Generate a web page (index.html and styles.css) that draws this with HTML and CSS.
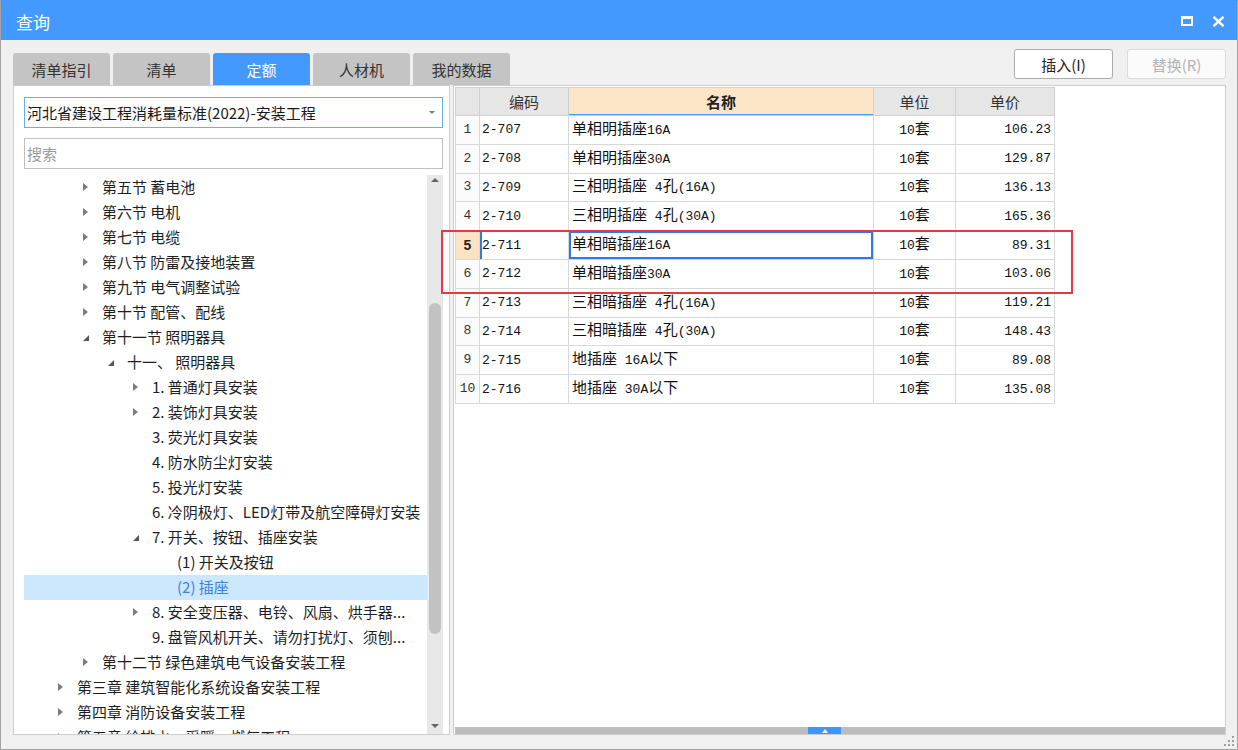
FILE: index.html
```html
<!DOCTYPE html>
<html lang="zh-CN">
<head>
<meta charset="utf-8">
<title>查询</title>
<link rel="stylesheet" href="styles.css">
</head>
<body>
<div class="window">
  <header class="titlebar">
    <span class="title">查询</span>
    <div class="winbtns">
      <svg class="ic" width="12" height="10" viewBox="0 0 12 10"><rect x="1" y="1" width="10" height="8" fill="none" stroke="#fff" stroke-width="2"/><rect x="0" y="0" width="12" height="3" fill="#fff"/></svg>
      <svg class="ic" width="13" height="11" viewBox="0 0 13 11"><path d="M1.5 0.8 L11.5 10.2 M11.5 0.8 L1.5 10.2" stroke="#fff" stroke-width="2.4" fill="none"/></svg>
    </div>
  </header>

  <div class="main">
    <div class="topbar">
      <nav class="tabs">
        <div class="tab">清单指引</div>
        <div class="tab">清单</div>
        <div class="tab active">定额</div>
        <div class="tab">人材机</div>
        <div class="tab">我的数据</div>
      </nav>
      <div class="actions">
        <button class="btn">插入(I)</button>
        <button class="btn" disabled>替换(R)</button>
      </div>
    </div>

    <div class="panels">
      <section class="left">
        <div class="select">
          <span>河北省建设工程消耗量标准(2022)-安装工程</span>
          <i class="caret"></i>
        </div>
        <div class="search">搜索</div>
        <div class="treewrap">
          <ul class="tree">
            <li class="l2"><i class="tg r"></i>第五节 蓄电池</li>
            <li class="l2"><i class="tg r"></i>第六节 电机</li>
            <li class="l2"><i class="tg r"></i>第七节 电缆</li>
            <li class="l2"><i class="tg r"></i>第八节 防雷及接地装置</li>
            <li class="l2"><i class="tg r"></i>第九节 电气调整试验</li>
            <li class="l2"><i class="tg r"></i>第十节 配管、配线</li>
            <li class="l2"><i class="tg d"></i>第十一节 照明器具</li>
            <li class="l3"><i class="tg d"></i>十一、 照明器具</li>
            <li class="l4"><i class="tg r"></i>1. 普通灯具安装</li>
            <li class="l4"><i class="tg r"></i>2. 装饰灯具安装</li>
            <li class="l4"><i class="tg"></i>3. 荧光灯具安装</li>
            <li class="l4"><i class="tg"></i>4. 防水防尘灯安装</li>
            <li class="l4"><i class="tg"></i>5. 投光灯安装</li>
            <li class="l4"><i class="tg"></i>6. 冷阴极灯、LED灯带及航空障碍灯安装</li>
            <li class="l4"><i class="tg d"></i>7. 开关、按钮、插座安装</li>
            <li class="l5"><i class="tg"></i>(1) 开关及按钮</li>
            <li class="l5 sel"><i class="tg"></i>(2) 插座</li>
            <li class="l4"><i class="tg r"></i>8. 安全变压器、电铃、风扇、烘手器...</li>
            <li class="l4"><i class="tg"></i>9. 盘管风机开关、请勿打扰灯、须刨...</li>
            <li class="l2"><i class="tg r"></i>第十二节 绿色建筑电气设备安装工程</li>
            <li class="l1"><i class="tg r"></i>第三章 建筑智能化系统设备安装工程</li>
            <li class="l1"><i class="tg r"></i>第四章 消防设备安装工程</li>
            <li class="l1"><i class="tg r"></i>第五章 给排水、采暖、燃气工程</li>
          </ul>
          <div class="vscroll">
            <i class="sb-up"></i>
            <div class="sb-track"><div class="sb-thumb"></div></div>
            <i class="sb-down"></i>
          </div>
        </div>
      </section>

      <section class="right">
        <div class="tablearea">
          <table class="grid">
            <colgroup>
              <col class="c-no"><col class="c-code"><col class="c-name"><col class="c-unit"><col class="c-price">
            </colgroup>
            <thead>
              <tr><th></th><th>编码</th><th class="cur">名称</th><th>单位</th><th>单价</th></tr>
            </thead>
            <tbody>
              <tr><td class="no">1</td><td class="code">2-707</td><td>单相明插座<span class="a">16A</span></td><td class="unit"><span class="a">10</span>套</td><td class="price">106.23</td></tr>
              <tr><td class="no">2</td><td class="code">2-708</td><td>单相明插座<span class="a">30A</span></td><td class="unit"><span class="a">10</span>套</td><td class="price">129.87</td></tr>
              <tr><td class="no">3</td><td class="code">2-709</td><td>三相明插座<span class="a"> 4</span>孔<span class="a">(16A)</span></td><td class="unit"><span class="a">10</span>套</td><td class="price">136.13</td></tr>
              <tr><td class="no">4</td><td class="code">2-710</td><td>三相明插座<span class="a"> 4</span>孔<span class="a">(30A)</span></td><td class="unit"><span class="a">10</span>套</td><td class="price">165.36</td></tr>
              <tr class="current"><td class="no">5</td><td class="code">2-711</td><td class="focus">单相暗插座<span class="a">16A</span></td><td class="unit"><span class="a">10</span>套</td><td class="price">89.31</td></tr>
              <tr><td class="no">6</td><td class="code">2-712</td><td>单相暗插座<span class="a">30A</span></td><td class="unit"><span class="a">10</span>套</td><td class="price">103.06</td></tr>
              <tr><td class="no">7</td><td class="code">2-713</td><td>三相暗插座<span class="a"> 4</span>孔<span class="a">(16A)</span></td><td class="unit"><span class="a">10</span>套</td><td class="price">119.21</td></tr>
              <tr><td class="no">8</td><td class="code">2-714</td><td>三相暗插座<span class="a"> 4</span>孔<span class="a">(30A)</span></td><td class="unit"><span class="a">10</span>套</td><td class="price">148.43</td></tr>
              <tr><td class="no">9</td><td class="code">2-715</td><td>地插座<span class="a"> 16A</span>以下</td><td class="unit"><span class="a">10</span>套</td><td class="price">89.08</td></tr>
              <tr><td class="no">10</td><td class="code">2-716</td><td>地插座<span class="a"> 30A</span>以下</td><td class="unit"><span class="a">10</span>套</td><td class="price">135.08</td></tr>
            </tbody>
          </table>
        </div>
        <div class="hscroll"><div class="hs-thumb"><i></i></div></div>
      </section>
    </div>
  </div>

  <div class="highlight"></div>
  <svg class="grip" width="10" height="10" viewBox="0 0 10 10">
    <rect x="8" y="0" width="2" height="2" fill="#a0a0a0"/>
    <rect x="8" y="4" width="2" height="2" fill="#a0a0a0"/>
    <rect x="4" y="4" width="2" height="2" fill="#a0a0a0"/>
    <rect x="8" y="8" width="2" height="2" fill="#a0a0a0"/>
    <rect x="4" y="8" width="2" height="2" fill="#a0a0a0"/>
    <rect x="0" y="8" width="2" height="2" fill="#a0a0a0"/>
  </svg>
</div>
</body>
</html>
```

FILE: styles.css
```css
* { box-sizing: border-box; }
html, body { margin: 0; padding: 0; }
body {
  width: 1238px;
  height: 750px;
  overflow: hidden;
  background: #f0f0f0;
  font-family: "Noto Sans CJK SC", "Noto Sans", sans-serif;
}

.window {
  position: relative;
  width: 1238px;
  height: 750px;
  border: 1px solid #a3a3a3;
  border-top-color: #4499ff;
  background: #f0f0f0;
  display: flex;
  flex-direction: column;
}

/* title bar */
.titlebar {
  flex: none;
  height: 39px;
  background: #4499ff;
  color: #fff;
  display: flex;
  align-items: center;
  justify-content: space-between;
  padding: 0 12px 0 15px;
}
.title { font-size: 17px; line-height: 20px; margin-top: 2px; }
.winbtns { display: flex; align-items: center; gap: 19px; margin-top: 1px; }
.ic { display: block; }

/* main */
.main {
  flex: 1;
  display: flex;
  flex-direction: column;
  padding: 0 11px 0 12px;
}
.topbar {
  flex: none;
  height: 45px;
  display: flex;
  justify-content: space-between;
}
.tabs { display: flex; gap: 3px; align-self: flex-end; }
.tab {
  width: 97px;
  height: 32px;
  background: #c4c4c4;
  border-radius: 3px 3px 0 0;
  color: #333;
  font-size: 15px;
  display: flex;
  align-items: center;
  justify-content: center;
}
.tab.active { background: #4499ff; color: #fff; }

.actions { display: flex; gap: 14px; padding-top: 9px; }
.btn {
  width: 99px;
  height: 30px;
  padding: 0;
  background: #fff;
  border: 1px solid #ababab;
  border-radius: 3px;
  color: #222;
  font: 15px "Noto Sans CJK SC", "Noto Sans", sans-serif;
}
.btn:disabled { border-color: #dadada; color: #b2b2b2; background: #fbfbfb; }

.panels { flex: none; height: 650px; display: flex; gap: 3px; }

/* left */
.left {
  width: 437px;
  flex: none;
  background: #fff;
  border: 1px solid #cdcdcd;
  padding: 11px 6px 0 10px;
  display: flex;
  flex-direction: column;
}
.select {
  flex: none;
  height: 31px;
  border: 1px solid #6fabf2;
  display: flex;
  align-items: center;
  justify-content: space-between;
  padding: 0 7px 0 2px;
  font-size: 15px;
  color: #1a1a1a;
}
.caret {
  width: 0; height: 0;
  border-left: 3px solid transparent;
  border-right: 3px solid transparent;
  border-top: 3px solid #777;
}
.search {
  flex: none;
  margin-top: 10px;
  height: 31px;
  border: 1px solid #bfbfbf;
  padding-left: 2px;
  font-size: 15px;
  line-height: 29px;
  color: #9a9a9a;
}
.treewrap {
  flex: 1;
  margin-top: 6px;
  display: flex;
  min-height: 0;
}
.tree {
  flex: 1;
  list-style: none;
  margin: 0;
  padding: 0;
  overflow: hidden;
  font-size: 15px;
  color: #1e1e1e;
}
.tree li {
  height: 25px;
  line-height: 23px;
  padding-bottom: 2px;
  display: flex;
  align-items: center;
  white-space: nowrap;
}
.tree .l1 { padding-left: 34px; }
.tree .l2 { padding-left: 59px; }
.tree .l3 { padding-left: 84px; }
.tree .l4 { padding-left: 109px; }
.tree .l5 { padding-left: 134px; }
.tree li.sel { background: #cce8ff; color: #3c80dc; }
.tg { flex: none; width: 19px; height: 23px; display: flex; align-items: center; }
.tg.r::before {
  content: "";
  border-left: 5px solid #7c7c7c;
  border-top: 4px solid transparent;
  border-bottom: 4px solid transparent;
}
.tg.d::before {
  content: "";
  width: 0; height: 0;
  margin-top: 3px;
  border-right: 6px solid #565656;
  border-top: 6px solid transparent;
}

.vscroll {
  flex: none;
  width: 16px;
  background: #e8e8e8;
  display: flex;
  flex-direction: column;
  align-items: center;
}
.sb-up, .sb-down { flex: none; height: 16px; width: 16px; display: flex; align-items: center; justify-content: center; }
.sb-up::before {
  content: "";
  border-left: 4px solid transparent;
  border-right: 4px solid transparent;
  border-bottom: 4px solid #666;
  margin-top: -6px;
}
.sb-down::before {
  content: "";
  border-left: 4px solid transparent;
  border-right: 4px solid transparent;
  border-top: 4px solid #666;
}
.sb-track { flex: 1; width: 16px; padding-top: 112px; display: flex; justify-content: center; }
.sb-thumb { width: 12px; height: 331px; background: #c2c2c2; border-radius: 6px; }

/* right */
.right {
  flex: 1;
  background: #fff;
  border: 1px solid #cdcdcd;
  padding: 1px 0 0 1px;
  display: flex;
  flex-direction: column;
}
.tablearea { flex: 1; min-height: 0; }
.grid {
  border-collapse: collapse;
  table-layout: fixed;
  width: 599px;
  font-size: 15px;
  color: #111;
}
.c-no { width: 24px; }
.c-code { width: 89px; }
.c-name { width: 305px; }
.c-unit { width: 82px; }
.c-price { width: 99px; }
.grid th {
  height: 28px;
  padding: 0 0 1px;
  background: #e6e6e6;
  border: 1px solid #d0d0d0;
  font-weight: normal;
  color: #333;
}
.grid th.cur {
  background: #fde5c7;
  font-weight: bold;
  color: #222;
  box-shadow: inset 0 -1px 0 #4499ff;
}
.grid td {
  height: 28.8px;
  padding: 0 3px 5px;
  border: 1px solid #d8d8d8;
  white-space: nowrap;
  overflow: hidden;
}
.a, .code, .price, .no {
  font-family: "Liberation Mono", "DejaVu Sans Mono", monospace;
  font-size: 13px;
}
.grid td.code, .grid td.price { padding-bottom: 0; }
.grid td.code { padding-left: 2px; }
.grid td.no { padding: 0 0 1px; text-align: center; color: #333; background: #fbfbfb; }
.grid td.unit { text-align: center; }
.grid td.price { text-align: right; }
.grid tr.current td.no {
  background: #fde3c4;
  font-family: "Liberation Sans", Arial, sans-serif;
  font-weight: bold;
  font-size: 14px;
  color: #222;
}
.grid tr.current td.code { box-shadow: inset 2px 0 0 #2a7bf0; }
.grid td.focus { box-shadow: inset 0 0 0 2px #2a7bf0; }

.hscroll {
  flex: none;
  height: 7px;
  background: #bdbdbd;
  padding-left: 353px;
}
.hs-thumb {
  width: 33px;
  height: 7px;
  background: #3d96ff;
  display: flex;
  align-items: center;
  justify-content: center;
}
.hs-thumb i {
  border-left: 3px solid transparent;
  border-right: 3px solid transparent;
  border-bottom: 4px solid #fff;
}

/* overlays */
.highlight {
  position: absolute;
  left: 440px;
  top: 229px;
  width: 632px;
  height: 64px;
  border: 2px solid #e8383d;
}
.grip { position: absolute; right: 3px; bottom: 3px; }
```
